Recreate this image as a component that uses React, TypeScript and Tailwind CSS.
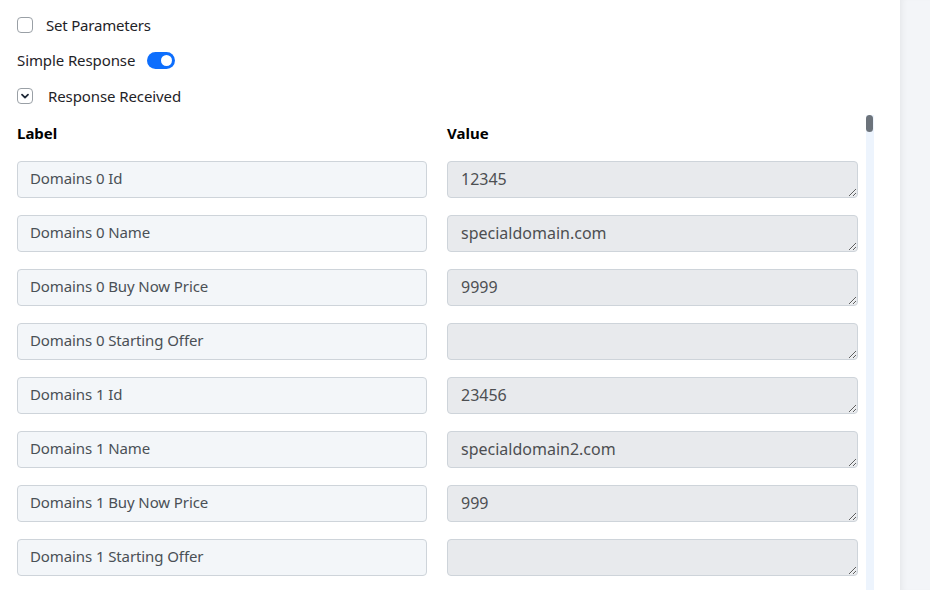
import React from 'react'

type Field = { label: string; value: string }

const fields: Field[] = [
  { label: 'Domains 0 Id', value: '12345' },
  { label: 'Domains 0 Name', value: 'specialdomain.com' },
  { label: 'Domains 0 Buy Now Price', value: '9999' },
  { label: 'Domains 0 Starting Offer', value: '' },
  { label: 'Domains 1 Id', value: '23456' },
  { label: 'Domains 1 Name', value: 'specialdomain2.com' },
  { label: 'Domains 1 Buy Now Price', value: '999' },
  { label: 'Domains 1 Starting Offer', value: '' },
  { label: 'Domains 2 Id', value: '34567' },
]

const FieldRow: React.FC<{ field: Field }> = ({ field }) => (
  <div className="flex gap-[20px]">
    <input
      readOnly
      value={field.label}
      className="w-[410px] h-[37px] shrink-0 rounded-[4px] border border-[#ced4da] bg-[#f3f6f9] pl-[12px] pr-[13px] pb-[2px] text-[15px] tracking-[-0.1px] text-[#4a5056] outline-none"
    />
    <textarea
      readOnly
      rows={1}
      value={field.value}
      className="w-[411px] h-[37px] shrink-0 rounded-[4px] border border-[#ced4da] bg-[#e8eaed] px-[13px] pt-[6px] text-[16px] leading-[22px] text-[#4d4f52] outline-none resize-y overflow-hidden"
    />
  </div>
)

export default function App() {
  return (
    <div
      className="flex h-[590px] w-full overflow-hidden bg-white text-[#1f2328]"
      style={{ fontFamily: '"Noto Sans", "Open Sans", sans-serif' }}
    >
      <div className="flex w-[900px] shrink-0 flex-col">
        {/* options above the response table */}
        <div className="flex flex-col pl-[17px] pt-[17px]">
          <label className="flex h-[16px] items-center gap-[13px] text-[15px] tracking-[-0.2px]">
            <span className="h-[16px] w-[16px] rounded-[4px] border border-[#9aa0a6] bg-white" />
            Set Parameters
          </label>
          <div className="mt-[19px] flex h-[16px] items-center gap-[12px] text-[15px] tracking-[-0.1px]">
            Simple Response
            <span className="flex h-[17px] w-[28px] items-center justify-end rounded-full bg-[#0d6efd] px-[3px]">
              <span className="h-[11px] w-[11px] rounded-full bg-white" />
            </span>
          </div>
          <div className="mt-[20px] flex h-[16px] items-center gap-[15px] text-[15px] tracking-[-0.1px]">
            <span className="flex h-[16px] w-[16px] items-center justify-center rounded-[4px] border border-[#9aa0a6]">
              <svg width="10" height="10" viewBox="0 0 10 10" fill="none">
                <path d="M2 3.6 5 6.6l3-3" stroke="#1f2937" strokeWidth="1.8" strokeLinecap="round" strokeLinejoin="round" />
              </svg>
            </span>
            Response Received
          </div>
        </div>

        {/* response table with its scrollbar */}
        <div className="mt-[11px] flex min-h-0 flex-1">
          <div className="flex min-h-0 flex-col overflow-hidden pl-[17px] pt-[7px]">
            <div className="flex gap-[20px] text-[15px] font-bold text-black">
              <span className="w-[410px]">Label</span>
              <span>Value</span>
            </div>
            <div className="mt-[16px] flex flex-col gap-[17px]">
              {fields.map((f) => (
                <FieldRow key={f.label} field={f} />
              ))}
            </div>
          </div>
          <div className="ml-[8px] w-[8px] shrink-0 bg-[#edf4fd]">
            <div className="h-[17px] w-[7px] rounded-full bg-[#6c737b]" />
          </div>
        </div>
      </div>
      <div className="flex-1 bg-[#f3f5f8] shadow-[inset_6px_0_6px_-4px_rgba(0,0,0,0.06)]" />
    </div>
  )
}
